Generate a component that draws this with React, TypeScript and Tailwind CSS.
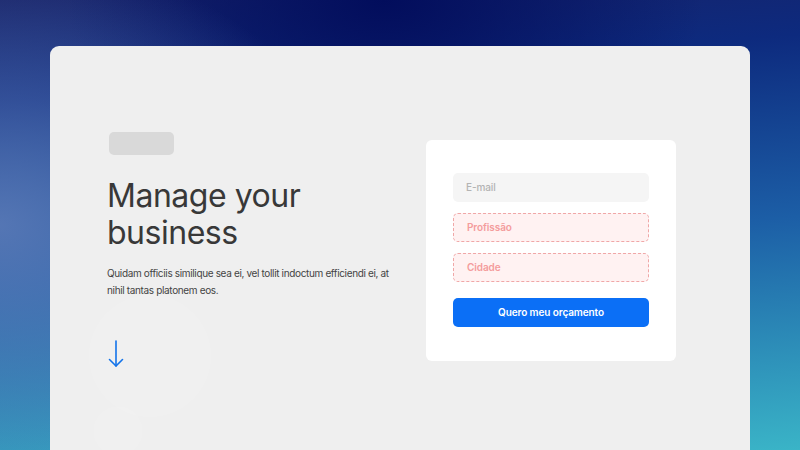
const fields = [
	{ label: 'E-mail', invalid: false },
	{ label: 'Profissão', invalid: true },
	{ label: 'Cidade', invalid: true },
];

function QuoteForm() {
	return (
		<div className="w-[250px] shrink-0 rounded-md bg-white px-[27px] pt-[33px] pb-[34px]">
			<div className="flex flex-col gap-[11px]">
				{fields.map((field) => (
					<div
						key={field.label}
						className={`flex h-[29px] items-center rounded-[5px] px-[13px] text-[10px] tracking-[-0.01em] ${field.invalid
							? 'border border-dashed border-[#f0a7a7] bg-[#fff2f2] font-semibold text-[#f49c9c]'
							: 'bg-[#f5f5f5] font-medium text-[#b3b3b3]'}`}
					>
						{field.label}
					</div>
				))}
			</div>
			<button className="mt-[16px] flex h-[29px] w-full items-center justify-center rounded-[5px] bg-[#0b6ff6] text-[10px] font-semibold tracking-[-0.01em] text-white">
				Quero meu orçamento
			</button>
		</div>
	);
}

function DownArrow() {
	return (
		<svg width="16" height="28" viewBox="0 0 16 28" fill="none" stroke="#1273ea" strokeWidth="1.6" strokeLinecap="round" strokeLinejoin="round">
			<path d="M8 1v25" />
			<path d="M1.5 19.5L8 26l6.5-6.5" />
		</svg>
	);
}

export default function App() {
	return (
		<div
			className="h-[450px] w-[800px] overflow-hidden bg-[radial-gradient(ellipse_45%_60%_at_0%_50%,rgba(95,125,185,0.85),transparent),radial-gradient(ellipse_40%_40%_at_48%_0%,#020d5c,transparent),linear-gradient(175deg,#172268_0%,#0d2a7e_20%,#1c5ea6_55%,#3ab4c7_100%)] pt-[46px] pl-[50px]"
			style={{ fontFamily: 'Inter, "Noto Sans", sans-serif' }}
		>
			<div className="relative h-[420px] w-[700px] rounded-t-[9px] bg-[#efefef] pl-[57px] pr-[74px] pt-[86px]">
				<div className="pointer-events-none absolute left-[35px] top-[245px] h-[130px] w-[130px] rounded-full bg-white/10 blur-md" />
				<div className="pointer-events-none absolute left-[38px] top-[355px] h-[60px] w-[60px] rounded-full bg-white/10 blur-md" />
				<div className="relative flex justify-between">
					<div className="flex flex-col">
						<div className="ml-[2px] h-[23px] w-[65px] rounded-[5px] bg-[#d9d9d9]" />
						<h1 className="mt-[22px] text-[32px] leading-[37px] font-normal tracking-[-0.015em] text-[#383838]">
							Manage your<br />business
						</h1>
						<p className="mt-[14px] w-[290px] text-[10px] leading-[17px] tracking-[-0.035em] text-[#444444]">
							Quidam officiis similique sea ei, vel tollit indoctum efficiendi ei, at nihil tantas platonem eos.
						</p>
						<div className="mt-[41px] ml-[1px]">
							<DownArrow />
						</div>
					</div>
					<div className="pt-[8px]">
						<QuoteForm />
					</div>
				</div>
			</div>
		</div>
	);
}
